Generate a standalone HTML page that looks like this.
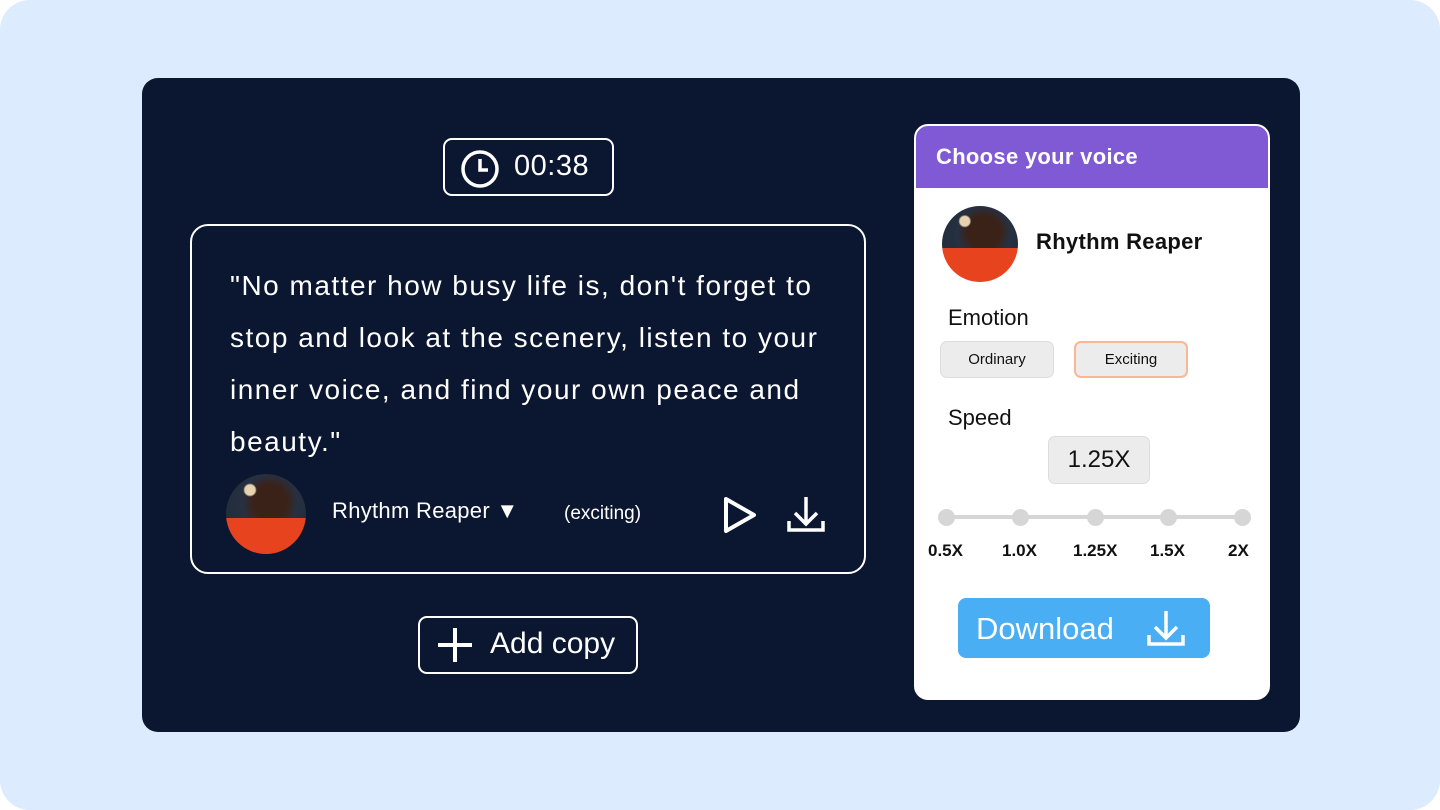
<!DOCTYPE html>
<html><head><style>
*{margin:0;padding:0;box-sizing:border-box}
body{width:1440px;height:810px;background:#fff;font-family:"Liberation Sans",sans-serif;position:relative;overflow:hidden}
.bg{position:absolute;left:0;top:0;width:1440px;height:810px;background:#dcebfe;border-radius:30px}
.dark{position:absolute;left:142px;top:78px;width:1158px;height:654px;background:#0b1630;border-radius:16px}
.abs{position:absolute}
.av{border-radius:50%;background:radial-gradient(circle at 30% 20%,#e8d3b0 0 6%,transparent 8%),linear-gradient(180deg,transparent 0 55%,#e8431f 55% 100%),radial-gradient(circle at 55% 35%,#3b2218 0 25%,#263040 40%,#1c2a38 100%);overflow:hidden}
.w{color:#fff}
.chip{position:absolute;top:341px;height:37px;border-radius:7px;background:#ececec;font-size:15px;display:flex;align-items:center;justify-content:center;color:#111}
.dot{position:absolute;top:509px;width:17px;height:17px;border-radius:50%;background:#d6d6d6}
.lbl{position:absolute;top:541px;font-weight:bold;font-size:17px;color:#111}
</style></head><body>
<div class="bg"></div>
<div class="dark"></div>
<div class="abs" style="left:443px;top:138px;width:171px;height:58px;border:2px solid #fff;border-radius:9px"></div>
<svg class="abs" style="left:459px;top:148px" width="42" height="42" viewBox="0 0 42 42"><circle cx="21" cy="21" r="17" fill="none" stroke="#fff" stroke-width="3.5"/><path d="M21 11v11h8" fill="none" stroke="#fff" stroke-width="3.5"/></svg>
<div class="abs w" style="left:514px;top:150px;font-size:29px;letter-spacing:0.5px">00:38</div>
<div class="abs" style="left:190px;top:224px;width:676px;height:350px;border:2px solid #fff;border-radius:18px"></div>
<div class="abs w" style="left:230px;top:260px;width:612px;font-size:28px;line-height:52px;letter-spacing:1.5px">"No matter how busy life is, don't forget to stop and look at the scenery, listen to your inner voice, and find your own peace and beauty."</div>
<div class="abs av" style="left:226px;top:474px;width:80px;height:80px"></div>
<div class="abs w" style="left:332px;top:498px;font-size:22px;letter-spacing:0.3px">Rhythm Reaper ▼</div>
<div class="abs w" style="left:564px;top:503px;font-size:19px">(exciting)</div>
<svg class="abs" style="left:720px;top:495px" width="40" height="40" viewBox="0 0 40 40"><path d="M6 4L34 20L6 36Z" fill="none" stroke="#fff" stroke-width="4" stroke-linejoin="round"/></svg>
<svg class="abs" style="left:786px;top:494px" width="40" height="40" viewBox="0 0 40 40"><path d="M20 3v27M9 19l11 11 11-11M3 27v9h34v-9" fill="none" stroke="#fff" stroke-width="3.5"/></svg>
<div class="abs" style="left:418px;top:616px;width:220px;height:58px;border:2px solid #fff;border-radius:9px"></div>
<svg class="abs" style="left:436px;top:626px" width="38" height="38" viewBox="0 0 38 38"><path d="M19 2v34M2 19h34" stroke="#fff" stroke-width="4"/></svg>
<div class="abs w" style="left:490px;top:627px;font-size:30px">Add copy</div>
<div class="abs" style="left:914px;top:124px;width:356px;height:576px;background:#fff;border-radius:14px;overflow:hidden;border:2px solid #fff">
<div style="height:62px;background:#7f5ad4;color:#fff;font-weight:bold;font-size:22px;padding:18px 0 0 20px;letter-spacing:0.3px">Choose your voice</div>
</div>
<div class="abs av" style="left:942px;top:206px;width:76px;height:76px"></div>
<div class="abs" style="left:1036px;top:229px;font-size:22px;color:#111;font-weight:bold;letter-spacing:0.3px">Rhythm Reaper</div>
<div class="abs" style="left:948px;top:305px;font-size:22px;color:#111">Emotion</div>
<div class="chip" style="left:940px;width:114px;border:1px solid #ddd">Ordinary</div>
<div class="chip" style="left:1074px;width:114px;border:2px solid #fbb695">Exciting</div>
<div class="abs" style="left:948px;top:405px;font-size:22px;color:#111">Speed</div>
<div class="abs" style="left:1048px;top:436px;width:102px;height:48px;background:#ececec;border:1px solid #ddd;border-radius:7px;font-size:24px;color:#111;display:flex;align-items:center;justify-content:center">1.25X</div>
<div class="abs" style="left:946px;top:515px;width:296px;height:4px;background:#d6d6d6"></div>
<div class="dot" style="left:938px"></div><div class="dot" style="left:1012px"></div><div class="dot" style="left:1087px"></div><div class="dot" style="left:1160px"></div><div class="dot" style="left:1234px"></div>
<div class="lbl" style="left:928px">0.5X</div><div class="lbl" style="left:1002px">1.0X</div><div class="lbl" style="left:1073px">1.25X</div><div class="lbl" style="left:1150px">1.5X</div><div class="lbl" style="left:1228px">2X</div>
<div class="abs" style="left:958px;top:598px;width:252px;height:60px;background:#4aaef5;border-radius:8px"></div>
<div class="abs w" style="left:976px;top:611px;font-size:31px">Download</div>
<svg class="abs" style="left:1146px;top:608px" width="40" height="40" viewBox="0 0 40 40"><path d="M20 3v27M9 19l11 11 11-11M3 27v9h34v-9" fill="none" stroke="#fff" stroke-width="3.5"/></svg>
</body></html>
